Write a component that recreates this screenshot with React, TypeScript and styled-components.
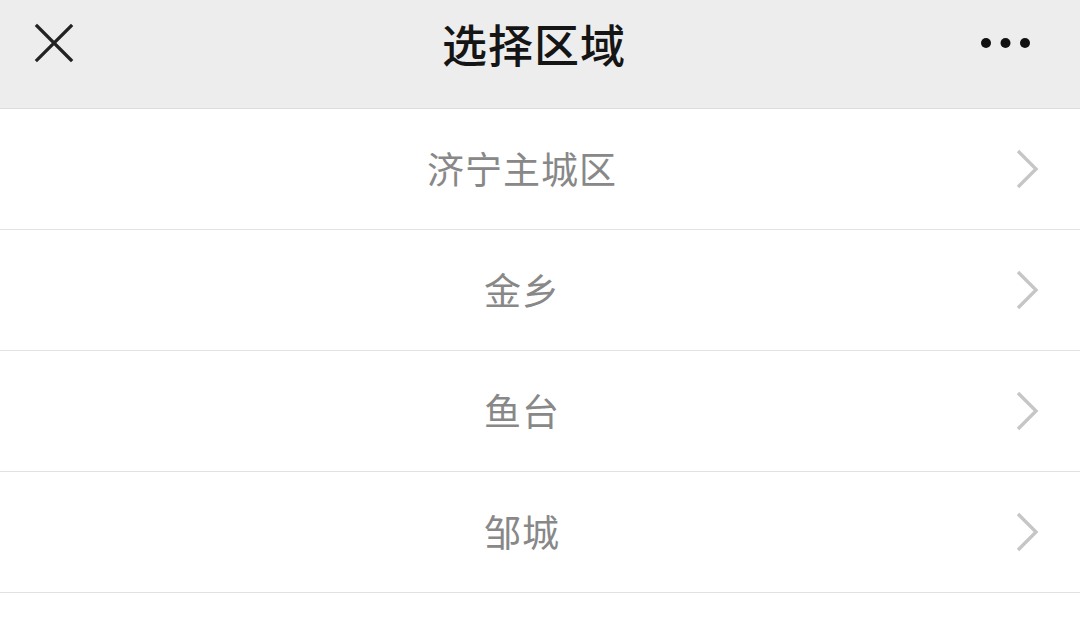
import React from 'react';
import styled, { createGlobalStyle } from 'styled-components';

const GlobalStyle = createGlobalStyle`
  html, body {
    margin: 0;
    padding: 0;
    background: #ffffff;
    font-family: "Noto Sans CJK SC", "Noto Sans", sans-serif;
  }
`;

const Page = styled.div`
  width: 1080px;
  min-height: 624px;
  background: #ffffff;
`;

const Header = styled.header`
  height: 108px;
  background: #ededed;
  border-bottom: 1px solid #dcdcdc;
  display: grid;
  grid-template-columns: 120px 1fr 120px;
  align-items: center;
`;

const IconButton = styled.div<{ $align: 'start' | 'end' }>`
  display: flex;
  justify-content: ${p => (p.$align === 'start' ? 'flex-start' : 'flex-end')};
  padding: ${p => (p.$align === 'start' ? '0 0 0 34px' : '0 48px 0 0')};
  margin-top: -22px;
`;

const Title = styled.h1`
  margin: -22px 0 0 -12px;
  text-align: center;
  font-size: 45px;
  font-weight: 500;
  color: #151515;
  letter-spacing: 1px;
`;

const List = styled.ul`
  list-style: none;
  margin: 0;
  padding: 0;
`;

const Row = styled.li`
  height: 120px;
  border-bottom: 1px solid #e2e2e2;
  display: flex;
  align-items: center;
  padding-right: 36px;
  position: relative;
`;

const RowLabel = styled.span`
  flex: 1;
  text-align: center;
  font-size: 37px;
  color: #888888;
  letter-spacing: 1px;
  margin-top: -2px;
`;

const Chevron = styled.svg`
  position: absolute;
  right: 40px;
  top: 50%;
  transform: translateY(-50%);
`;

const areas = ['济宁主城区', '金乡', '鱼台', '邹城'];

const App: React.FC = () => (
  <Page>
    <GlobalStyle />
    <Header>
      <IconButton $align="start">
        <svg width="40" height="40" viewBox="0 0 40 40">
          <path d="M3 3 L37 37 M37 3 L3 37" stroke="#222" strokeWidth="3.2" strokeLinecap="square" fill="none" />
        </svg>
      </IconButton>
      <Title>选择区域</Title>
      <IconButton $align="end">
        <svg width="52" height="14" viewBox="0 0 52 14">
          <circle cx="6" cy="7" r="5" fill="#111" />
          <circle cx="25.5" cy="7" r="5" fill="#111" />
          <circle cx="45" cy="7" r="5" fill="#111" />
        </svg>
      </IconButton>
    </Header>
    <List>
      {areas.map(area => (
        <Row key={area}>
          <RowLabel>{area}</RowLabel>
          <Chevron width="24" height="40" viewBox="0 0 24 40">
            <path d="M2 2 L20 20 L2 38" stroke="#c6c6c6" strokeWidth="3.4" fill="none" />
          </Chevron>
        </Row>
      ))}
    </List>
  </Page>
);

export default App;
